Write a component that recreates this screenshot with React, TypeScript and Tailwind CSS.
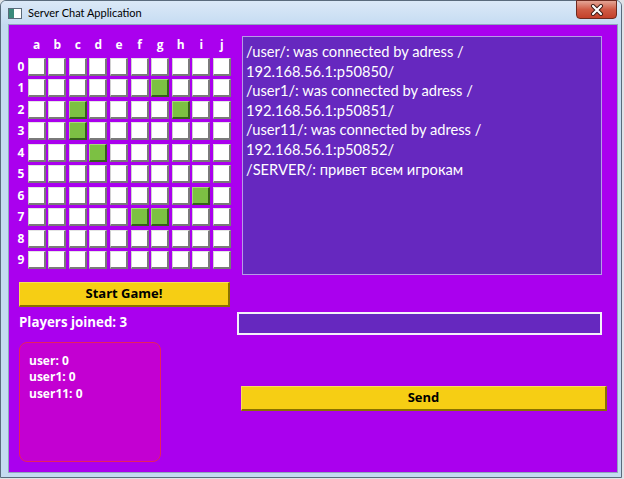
import React from "react";

const cols = ["a", "b", "c", "d", "e", "f", "g", "h", "i", "j"];
const green = new Set(["1-6", "2-2", "2-7", "3-2", "4-3", "6-8", "7-5", "7-6"]);

const chatLines = [
  "/user/: was connected by adress /",
  "192.168.56.1:p50850/",
  "/user1/: was connected by adress /",
  "192.168.56.1:p50851/",
  "/user11/: was connected by adress /",
  "192.168.56.1:p50852/",
  "/SERVER/: привет всем игрокам",
];

function Cell({ on }: { on: boolean }) {
  return on ? (
    <div className="w-[18px] h-[18px] bg-[#7cc043] border-t border-l border-t-[#a6d879] border-l-[#a6d879] border-r-2 border-b-2 border-r-[#35601a] border-b-[#35601a]" />
  ) : (
    <div className="w-[18px] h-[18px] bg-white border-t border-l border-t-[#e4e4e4] border-l-[#d0d0d0] border-r-2 border-b-2 border-r-[#7a7a7a] border-b-[#7a7a7a]" />
  );
}

export default function App() {
  return (
    <div className="w-[624px] h-[479px] bg-[#dfe3e8] overflow-hidden" style={{ fontFamily: '"Open Sans", "Noto Sans", sans-serif' }}>
      <div className="w-[622px] h-[478px] border border-[#5a6b7c] rounded-t-[6px] bg-[#c4dbf1] flex flex-col">
        {/* Title bar */}
        <div className="h-[23px] flex items-start relative bg-gradient-to-b from-[#dbe9f7] to-[#c6dcf2] rounded-t-[5px]">
          <div className="mt-[7px] ml-[7px] w-[14px] h-[11px] border border-[#5b6b7a] bg-white flex">
            <div className="w-[5px] h-full bg-[#3a8a7a]" />
          </div>
          <div className="ml-[6px] mt-[5px] text-[11px] leading-[14px] text-black" style={{ fontFamily: 'Lato, "Noto Sans", sans-serif' }}>
            Server Chat Application
          </div>
          <div className="absolute right-[4px] top-[-1px] w-[41px] h-[19px] rounded-b-[4px] border border-[#6e2a1f] bg-gradient-to-b from-[#e3a596] via-[#cf5b45] to-[#c4402a] flex items-center justify-center">
            <svg width="14" height="12" viewBox="0 0 14 12">
              <path d="M3 2 L11 10 M11 2 L3 10" stroke="#3b1a14" strokeWidth="4" strokeLinecap="round" />
              <path d="M3 2 L11 10 M11 2 L3 10" stroke="#ffffff" strokeWidth="2.2" strokeLinecap="round" />
            </svg>
          </div>
        </div>
        {/* Body */}
        <div className="ml-[7px] w-[610px] h-[449px] border border-[#8ea5bc] bg-[#aa00ee] flex">
          {/* Left column */}
          <div className="w-[226px] pl-[7px] pt-[11px] flex flex-col">
            <div className="grid grid-cols-[9px_repeat(10,18px)] gap-x-[2.6px] gap-y-[3.5px] text-white font-bold text-[12px]">
              <div />
              {cols.map((c) => (
                <div key={c} className="h-[18px] flex items-center justify-center leading-none">
                  {c}
                </div>
              ))}
              {Array.from({ length: 10 }).map((_, r) => (
                <React.Fragment key={r}>
                  <div className="h-[18px] flex items-center justify-center leading-none pl-[1px]">{r}</div>
                  {cols.map((_, c) => (
                    <Cell key={c} on={green.has(`${r}-${c}`)} />
                  ))}
                </React.Fragment>
              ))}
            </div>
            <div className="ml-[3px] mt-[13px] w-[211px] h-[25px] bg-[#f6ce14] border-r-2 border-b-2 border-r-[#8a7100] border-b-[#8a7100] border-t border-l border-t-[#f9dc5a] border-l-[#f9dc5a] flex items-center justify-center text-black font-bold text-[13px]">
              Start Game!
            </div>
            <div className="ml-[3px] mt-[7px] h-[18px] flex items-center text-white font-bold text-[13.3px]">
              Players joined: 3
            </div>
            <div className="ml-[3px] mt-[10px] w-[142px] h-[120px] rounded-[8px] border border-[#e8205e] bg-[#c300d2] pl-[9px] pt-[10px] text-white font-bold text-[12px] leading-[16.4px]">
              <div>user: 0</div>
              <div>user1: 0</div>
              <div>user11: 0</div>
            </div>
          </div>
          {/* Right column */}
          <div className="flex flex-col pt-[11px]">
            <div className="ml-[7px] w-[360px] h-[239px] border border-[#b79ae6] bg-[#6628bf] pl-[3px] pt-[5px] text-white text-[14.7px] leading-[19.6px]" style={{ fontFamily: 'Lato, "Open Sans", sans-serif' }}>
              {chatLines.map((l, i) => (
                <div key={i} className="whitespace-nowrap">
                  {l}
                </div>
              ))}
            </div>
            <div className="ml-[2px] mt-[37px] w-[365px] h-[23px] border-2 border-[#f4f0fa] bg-[#6628bf]" />
            <div className="ml-[6px] mt-[51px] w-[366px] h-[25px] bg-[#f6ce14] border-r-2 border-b-2 border-r-[#8a7100] border-b-[#8a7100] border-t border-l border-t-[#f9dc5a] border-l-[#f9dc5a] flex items-center justify-center text-black font-bold text-[13px]">
              Send
            </div>
          </div>
        </div>
      </div>
    </div>
  );
}
